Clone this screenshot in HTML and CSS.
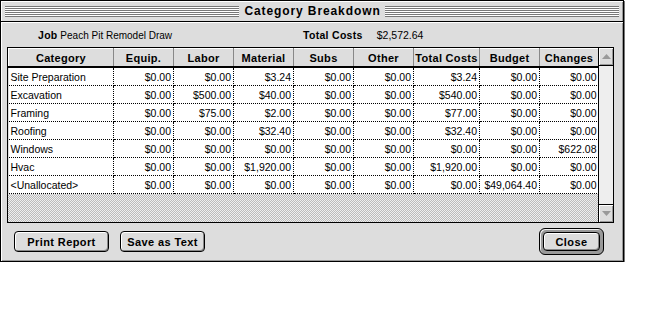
FILE: index.html
```html
<!DOCTYPE html>
<html lang="en">
<head>
  <meta charset="UTF-8" />
  <title>Category Breakdown</title>
  <link rel="stylesheet" href="styles.css">
</head>
<body>
  <div class="window">
    <div class="titlebar">
      <div class="stripes"></div>
      <div class="title">Category Breakdown</div>
      <div class="stripes"></div>
    </div>

    <div class="content">
      <div class="info">
        <span class="job"><b>Job</b> Peach Pit Remodel Draw</span>
        <span class="total"><b>Total Costs</b><span class="total-value">$2,572.64</span></span>
      </div>

      <div class="listbox">
        <div class="list">
          <table class="grid">
            <colgroup>
              <col style="width:105px">
              <col style="width:60px">
              <col style="width:60px">
              <col style="width:60px">
              <col style="width:60px">
              <col style="width:60px">
              <col style="width:66px">
              <col style="width:60px">
              <col style="width:59px">
            </colgroup>
            <thead>
              <tr>
                <th>Category</th>
                <th>Equip.</th>
                <th>Labor</th>
                <th>Material</th>
                <th>Subs</th>
                <th>Other</th>
                <th>Total Costs</th>
                <th>Budget</th>
                <th>Changes</th>
              </tr>
            </thead>
            <tbody>
              <tr><td>Site Preparation</td><td>$0.00</td><td>$0.00</td><td>$3.24</td><td>$0.00</td><td>$0.00</td><td>$3.24</td><td>$0.00</td><td>$0.00</td></tr>
              <tr><td>Excavation</td><td>$0.00</td><td>$500.00</td><td>$40.00</td><td>$0.00</td><td>$0.00</td><td>$540.00</td><td>$0.00</td><td>$0.00</td></tr>
              <tr><td>Framing</td><td>$0.00</td><td>$75.00</td><td>$2.00</td><td>$0.00</td><td>$0.00</td><td>$77.00</td><td>$0.00</td><td>$0.00</td></tr>
              <tr><td>Roofing</td><td>$0.00</td><td>$0.00</td><td>$32.40</td><td>$0.00</td><td>$0.00</td><td>$32.40</td><td>$0.00</td><td>$0.00</td></tr>
              <tr><td>Windows</td><td>$0.00</td><td>$0.00</td><td>$0.00</td><td>$0.00</td><td>$0.00</td><td>$0.00</td><td>$0.00</td><td>$622.08</td></tr>
              <tr><td>Hvac</td><td>$0.00</td><td>$0.00</td><td>$1,920.00</td><td>$0.00</td><td>$0.00</td><td>$1,920.00</td><td>$0.00</td><td>$0.00</td></tr>
              <tr><td>&lt;Unallocated&gt;</td><td>$0.00</td><td>$0.00</td><td>$0.00</td><td>$0.00</td><td>$0.00</td><td>$0.00</td><td>$49,064.40</td><td>$0.00</td></tr>
            </tbody>
          </table>
          <div class="filler"></div>
        </div>

        <div class="scrollbar">
          <div class="arrow up">
            <svg width="9" height="5" viewBox="0 0 9 5"><polygon points="4.5,0 9,5 0,5" fill="#999"/></svg>
          </div>
          <div class="track"></div>
          <div class="arrow down">
            <svg width="9" height="5" viewBox="0 0 9 5"><polygon points="0,0 9,0 4.5,5" fill="#999"/></svg>
          </div>
        </div>
      </div>

      <div class="buttons">
        <button class="btn print">Print Report</button>
        <button class="btn save">Save as Text</button>
        <span class="spacer"></span>
        <span class="default-ring"><button class="btn close">Close</button></span>
      </div>
    </div>
  </div>
</body>
</html>
```

FILE: styles.css
```css
body {
  margin: 0;
  background: #fff;
  font-family: "Liberation Sans", Arial, sans-serif;
  color: #000;
}

.window {
  width: 622px;
  height: 260px;
  border: 1px solid #000;
  background: #ddd;
  box-shadow: 1px 1px 0 #777;
  display: flex;
  flex-direction: column;
}

/* title bar */

.titlebar {
  height: 20px;
  border-bottom: 1px solid #000;
  box-shadow: inset 1px 1px 0 #fff, inset -1px 0 0 #999;
  display: flex;
  align-items: center;
  padding: 0 4px;
}

.stripes {
  flex: 1;
  height: 11px;
  background: repeating-linear-gradient(to bottom, #777 0 1px, #fff 1px 2px);
}

.title {
  font-weight: bold;
  font-size: 12px;
  letter-spacing: 0.9px;
  padding: 0 4px 0 5px;
  line-height: 20px;
}

/* content */

.content {
  flex: 1;
  padding: 0 9px 0 6px;
  box-shadow: inset 1px 1px 0 #fff, inset -1px -1px 0 #999;
  display: flex;
  flex-direction: column;
}

.info {
  height: 24px;
  display: flex;
  align-items: center;
  font-size: 10px;
  padding-top: 1px;
}

.info b {
  font-size: 10.5px;
  letter-spacing: 0.3px;
}

.job {
  margin-left: 31px;
  width: 265px;
}

.total-value {
  margin-left: 14px;
  font-size: 10.5px;
}

.listbox {
  height: 174px;
  border: 1px solid #000;
  display: flex;
}

.list {
  width: 590px;
  display: flex;
  flex-direction: column;
}

.grid {
  border-collapse: collapse;
  table-layout: fixed;
  width: 590px;
}

.grid th {
  height: 17px;
  padding: 0;
  background: #ddd;
  font-size: 11px;
  letter-spacing: 0.3px;
  font-weight: bold;
  border-left: 1px solid #fff;
  border-top: 1px solid #fff;
  border-right: 1px solid #888;
  border-bottom: 2px solid #000;
  white-space: nowrap;
}

.grid td {
  height: 17px;
  padding: 0 2px 0 0;
  background: #fff;
  font-size: 10.5px;
  text-align: right;
  white-space: nowrap;
  border-right: 1px dotted #000;
  border-bottom: 1px dotted #000;
}

.grid td:first-child {
  text-align: left;
  padding-left: 2px;
}

.grid td:last-child {
  border-right: none;
}

.filler {
  flex: 1;
  background: repeating-conic-gradient(#bbb 0 25%, #eee 0 50%) 0 0 / 2px 2px;
}

/* scroll bar */

.scrollbar {
  width: 14px;
  border-left: 1px solid #000;
  display: flex;
  flex-direction: column;
  background: #eee;
}

.arrow {
  height: 17px;
  background: #ddd;
  display: flex;
  align-items: center;
  justify-content: center;
  box-shadow: inset 1px 1px 0 #fff, inset -1px -1px 0 #999;
}

.arrow.up {
  border-bottom: 1px solid #000;
}

.arrow.down {
  border-top: 1px solid #000;
}

.track {
  flex: 1;
}

/* buttons */

.buttons {
  flex: 1;
  display: flex;
  align-items: center;
  padding: 0 10px 1px 7px;
  gap: 11px;
}

.spacer {
  flex: 1;
}

.btn {
  font-family: "Liberation Sans", Arial, sans-serif;
  font-weight: bold;
  font-size: 11px;
  letter-spacing: 0.4px;
  height: 21px;
  padding: 0;
  background: #ddd;
  border: 1px solid #000;
  border-radius: 4px;
  box-shadow: inset 1px 1px 0 #fff, inset -1px -1px 0 #888;
  color: #000;
}

.btn.print {
  width: 95px;
}

.btn.save {
  width: 85px;
}

.default-ring {
  display: inline-flex;
  padding: 3px;
  border: 1px solid #000;
  border-radius: 6px;
  background: #999;
  box-shadow: inset 1px 1px 0 #eee;
}

.btn.close {
  width: 57px;
  height: 19px;
}
```
